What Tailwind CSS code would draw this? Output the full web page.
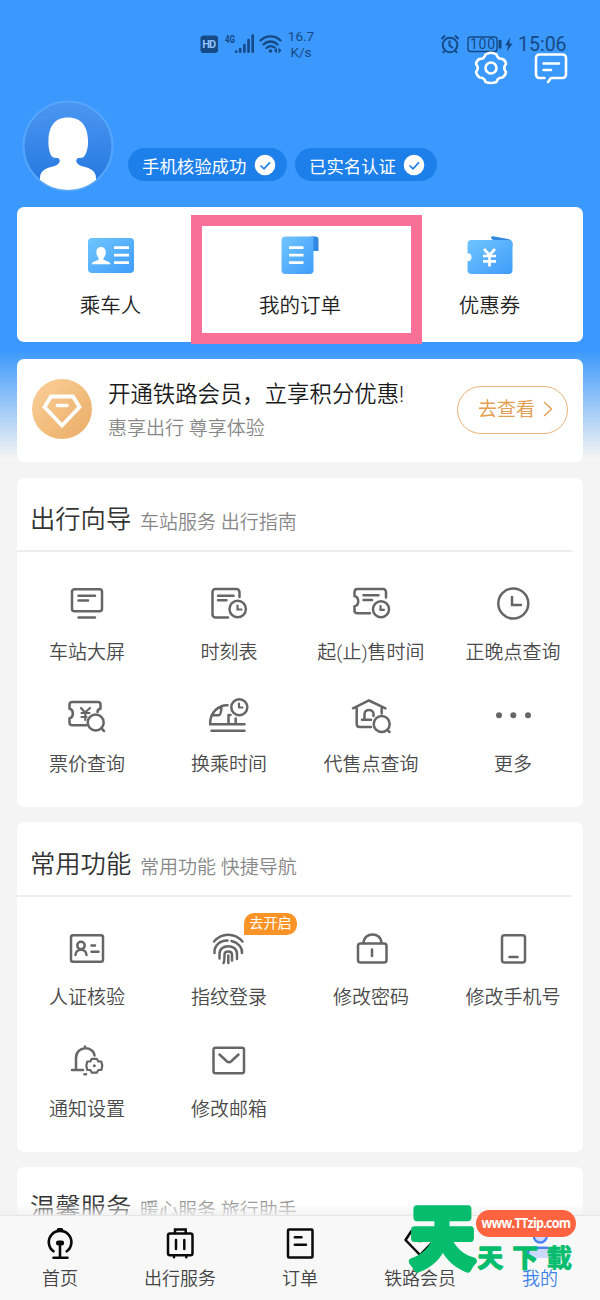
<!DOCTYPE html>
<html lang="zh-CN">
<head>
<meta charset="utf-8">
<title>我的</title>
<script src="https://cdn.jsdelivr.net/npm/@tailwindcss/browser@4"></script>
</head>
<body class="bg-[#f4f4f4]">
<div class="relative flex h-[1300px] w-[600px] flex-col overflow-hidden bg-[#f4f4f4] bg-[linear-gradient(to_bottom,#3b98fc_0px,#3b98fc_350px,#f4f4f4_458px)] bg-no-repeat font-['Roboto','Noto_Sans_CJK_SC',sans-serif] font-[350] text-[#333]">

  <!-- status bar -->
  <header class="flex h-[56px] shrink-0 items-end pr-[33px] pl-[200px] font-normal text-[#164a86]">
    <svg class="mb-[2px] h-[20px] w-[84px]" viewBox="0 0 84 20">
      <rect x="0.5" y="1.5" width="17.5" height="17.5" rx="3" fill="#164a86"/>
      <text x="9.2" y="14.2" font-family="Roboto" font-weight="700" font-size="11" fill="#8fc3fb" text-anchor="middle" textLength="14">HD</text>
      <text x="25" y="9" font-family="Roboto" font-weight="700" font-size="10.5" fill="#164a86" textLength="10" lengthAdjust="spacingAndGlyphs">4G</text>
      <g stroke="#164a86" stroke-width="2.6" stroke-linecap="round"><path d="M36.2 17.5v.2M40.2 15v2.8M44.4 11v6.8M48.500 6v11.800M52.700 1.500v16.300"/></g>
      <g fill="none" stroke="#164a86" stroke-width="2.300" stroke-linecap="round"><path d="M60.500 6.500c5.500-5.500 14.500-5.500 20 0M63.500 10.500c4-4 10-4 14 0M66.500 14c2-2 5.500-2.500 8-.5"/></g>
      <circle cx="70.500" cy="17" r="1.800" fill="#164a86"/><path d="M77 13.500v6l-3-3zM78.500 13.500v6l3-3z" fill="#164a86"/>
    </svg>
    <div class="mb-[-4px] w-[34px] text-center text-[13.500px] leading-[15.500px]">16.7<br>K/s</div>
    <svg class="mb-[1px] ml-auto h-[22px] w-[76px]" viewBox="0 0 76 22" fill="none" stroke="#164a86" stroke-width="2">
      <circle cx="10" cy="12" r="7.300"/><path d="M9.500 7.500v5l3.500 2.500M1.500 6l3.500-3.500M15 2.500l3.500 3.500M4.500 18l-1.500 2M15.500 18l1.500 2"/>
      <rect x="28" y="4" width="29" height="14.500" rx="2.500" stroke-width="1.400"/>
      <path d="M60 7v8.500" stroke-width="3"/>
      <text x="42.500" y="16" font-family="Roboto" font-size="14" fill="#164a86" stroke="none" text-anchor="middle" textLength="25">100</text>
      <path d="M70 4.500l-5 8h3l-1 6 5.500-8h-3z" fill="#164a86" stroke="none"/>
    </svg>
    <div class="ml-[2px] w-[49px] text-[19.500px] leading-[22px]">15:06</div>
  </header>

  <!-- page actions -->
  <div class="-mt-[6px] flex h-[38px] shrink-0 justify-end gap-[24px] pr-[31px]">
    <svg class="h-[36px] w-[36px]" viewBox="0 0 36 36" fill="none" stroke="#fff" stroke-width="2.600" stroke-linejoin="round">
      <path d="M12.500 4.500Q18 1 23.500 4.500Q24.500 9 29.500 9Q33 11 33 14Q29.500 18 33 22Q32.500 25.500 29.500 27.500Q24.500 27.500 23.500 32Q18 34 12.500 32Q11.500 27.500 6.500 27.500Q3.500 25 3 22Q6.500 18 3 14Q3.500 10.500 6.500 9Q11.500 9 12.500 4.500Z"/>
      <circle cx="18" cy="18" r="5.500"/>
    </svg>
    <svg class="h-[36px] w-[36px]" viewBox="0 0 36 36" fill="none" stroke="#fff" stroke-width="2.600" stroke-linecap="round" stroke-linejoin="round">
      <path d="M11.500 28H6.500a3.500 3.500 0 0 1-3.500-3.500V8A3.500 3.500 0 0 1 6.500 4.500H29.500A3.500 3.500 0 0 1 33 8V24.500a3.500 3.500 0 0 1-3.500 3.500H18l-3 4M10.500 13.500H26M10.500 20H18"/>
    </svg>
  </div>

  <!-- profile -->
  <section class="mt-[11px] flex h-[93px] shrink-0 items-start pl-[22px]">
    <svg class="mt-[1px] h-[92px] w-[92px]" viewBox="0 0 92 92">
      <defs><linearGradient id="av" x1="0" y1="0" x2="0" y2="1"><stop offset="0" stop-color="#4b97f1"/><stop offset="1" stop-color="#2475e0"/></linearGradient><clipPath id="ac"><circle cx="46" cy="46" r="44"/></clipPath></defs>
      <circle cx="46" cy="46" r="44.500" fill="url(#av)" stroke="#55a6fb" stroke-width="2"/>
      <path clip-path="url(#ac)" fill="#fff" d="M46 17.500C32 17.500 27 27 26.500 40C26 47 27.500 53 29.500 56Q30.500 58 34 58H36Q38.500 59.500 37.500 62Q36 65 31 66.500C22 68.500 18 72 18 78V92H74V78C74 72 70 68.500 61 66.500Q56 65 54.500 62Q53.500 59.500 56 58H58Q61.500 58 62.500 56C64.500 53 66.500 47 66 40C65.500 27 60 17.500 46 17.500Z"/>
    </svg>
    <div class="mt-[49px] ml-[14px] flex gap-[8px] text-[17.400px] font-normal text-white">
      <div class="flex h-[33px] w-[159px] items-center justify-between rounded-full bg-[#1d7fe9] pr-[11px] pl-[14px]"><span class="pt-[5px] whitespace-nowrap">手机核验成功</span>
        <svg class="h-[22px] w-[22px]" viewBox="0 0 22 22"><circle cx="11" cy="11" r="10.300" fill="#fff"/><path d="M6.500 11.500l3.500 3.300 6-6.500" fill="none" stroke="#1d7fe9" stroke-width="1.700"/></svg></div>
      <div class="flex h-[33px] w-[142px] items-center justify-between rounded-full bg-[#1d7fe9] pr-[12px] pl-[14px]"><span class="pt-[5px] whitespace-nowrap">已实名认证</span>
        <svg class="h-[22px] w-[22px]" viewBox="0 0 22 22"><circle cx="11" cy="11" r="10.300" fill="#fff"/><path d="M6.500 11.500l3.500 3.300 6-6.500" fill="none" stroke="#1d7fe9" stroke-width="1.700"/></svg></div>
    </div>
  </section>

  <main class="mt-[15px] flex flex-col px-[17px]">
    <!-- shortcuts -->
    <section class="relative grid h-[135px] grid-cols-[187px_192px_187px] rounded-[7px] bg-white text-[20.500px] leading-[28px] text-[#222]">
      <div class="flex flex-col items-center pt-[24px]">
        <svg class="h-[50px] w-[50px]" viewBox="0 0 50 50">
          <defs><linearGradient id="bl" x1="0" y1="0" x2="1" y2="1"><stop offset="0" stop-color="#70c5fe"/><stop offset="1" stop-color="#3f9cfa"/></linearGradient></defs>
          <rect x="2" y="7" width="46" height="35" rx="4" fill="url(#bl)"/>
          <path fill="#fff" d="M15 16c-3.300 0-5 2.400-4.700 5.800.2 2.500 1.200 4 2.300 5.200v1.700L7 31q-1.200 1-1.200 2.200H24.500Q24.500 32 23 31l-5.500-2.300V27c1.200-1.200 2.100-2.700 2.300-5.200C20 18.400 18.300 16 15 16zM28 15.200h15v2.900H28zM28 22.700h15v2.900H28zM28 30.200h15v2.900H28z"/>
        </svg>
        <span class="mt-[11px]">乘车人</span>
      </div>
      <div class="flex flex-col items-center pt-[24px]">
        <svg class="h-[50px] w-[50px]" viewBox="0 0 50 50">
          <path d="M36 5.500h4.500q3 0 3 3V20h-4.500q-3 0-3-3z" fill="#3188e0"/>
          <path d="M10 5.500H38.500V39q0 4-4 4H10.500q-4 0-4-4V9.500q0-4 4-4z" fill="url(#bl)"/>
          <path d="M14 16.700h14.500M14 24.200h14.500M14 31.700h14.500" stroke="#fff" stroke-width="2.700"/>
        </svg>
        <span class="mt-[11px]">我的订单</span>
      </div>
      <div class="flex flex-col items-center pt-[24px]">
        <svg class="h-[50px] w-[50px]" viewBox="0 0 50 50">
          <path d="M26 7q0-2 2-1.700L43 8q4 .7 4.500 5l-2 15z" fill="#3188e0"/>
          <path d="M6.500 9H43.500q4 0 4 4V39q0 4-4 4H6.500q-4 0-4-4V30.200a4 4 0 0 0 0-8V13q0-4 4-4z" fill="url(#bl)"/>
          <path d="M19 18l5.500 6 5.500-6M24.500 24v11.500M18 25h13M18 30.300h13" fill="none" stroke="#fff" stroke-width="2.700"/>
        </svg>
        <span class="mt-[11px]">优惠券</span>
      </div>
      <div class="absolute top-[8px] left-[174px] h-[129px] w-[231px] border-[11px] border-[#f86f97]"></div>
    </section>

    <!-- membership -->
    <section class="mt-[17px] flex h-[103px] items-center rounded-[7px] bg-white pr-[15px] pl-[14px]">
      <svg class="mt-[-3px] h-[62px] w-[62px]" viewBox="0 0 62 62">
        <defs><linearGradient id="gd" x1="0" y1="0" x2="1" y2="1"><stop offset="0" stop-color="#fbd09a"/><stop offset="1" stop-color="#eaac65"/></linearGradient></defs>
        <circle cx="31" cy="31" r="30" fill="url(#gd)"/>
        <path d="M20 18.500H42L48.500 29L31 47.500L13.500 29z" fill="none" stroke="#fff" stroke-width="3.800"/><path d="M26.500 27.500h9.500" stroke="#fff" stroke-width="3.600" stroke-linecap="round"/>
      </svg>
      <div class="mt-[1px] ml-[15px] flex flex-col whitespace-nowrap">
        <span class="text-[22.400px] leading-[34px] text-[#1a1a1a]">开通铁路会员，立享积分优惠!</span>
        <span class="pt-px text-[19px] leading-[34px] text-[#888]">惠享出行 尊享体验</span>
      </div>
      <div class="mt-[-2px] ml-auto flex h-[48px] w-[111px] items-center rounded-full border-[1.500px] border-[#e9b577] pl-[20px] text-[19px] font-normal text-[#e3a055]"><span class="pt-px whitespace-nowrap">去查看</span>
        <svg class="ml-[7px] h-[18px] w-[12px]" viewBox="0 0 12 18" fill="none" stroke="#e3a055" stroke-width="1.400"><path d="M2 1l7.500 7L2 15"/></svg></div>
    </section>

    <!-- travel guide -->
    <section class="mt-[16px] h-[329px] rounded-[7px] bg-white">
      <div class="mr-[11px] flex h-[74px] items-baseline border-b-2 border-[#ededed] pt-[22px] pl-[13px] whitespace-nowrap"><h2 class="w-[110px] text-[25.300px] leading-[40px]">出行向导</h2><span class="relative top-px text-[19px] text-[#888]">车站服务 出行指南</span></div>
      <div class="-mx-px grid grid-cols-4 gap-y-[28.500px] pt-[32px] text-[19px] leading-[28px] text-[#4a4a4a]">
        <div class="flex flex-col items-center"><svg class="h-[40px] w-[40px]" viewBox="0 0 40 40" fill="none" stroke="#666" stroke-width="2.500" stroke-linecap="round"><rect x="5" y="5.200" width="30" height="22" rx="2.500"/><path d="M11.500 11.700H28M11.500 16.500H21M11.500 33.500H28"/></svg><span class="mt-[15px]">车站大屏</span></div>
        <div class="flex flex-col items-center"><svg class="h-[40px] w-[40px]" viewBox="0 0 40 40" fill="none" stroke="#666" stroke-width="2.500" stroke-linecap="round"><path d="M30.500 13V8a3 3 0 0 0-3-3H6.500a3 3 0 0 0-3 3V30.500a3 3 0 0 0 3 3H19M9 11.700H24.500M9 16.300H17.500"/><circle cx="28.700" cy="25" r="8.200"/><path d="M28.500 21.500v4h4" stroke-width="2.200"/></svg><span class="mt-[15px]">时刻表</span></div>
        <div class="flex flex-col items-center"><svg class="h-[40px] w-[40px]" viewBox="0 0 40 40" fill="none" stroke="#666" stroke-width="2.500" stroke-linecap="round"><path d="M35 13.500V8a3 3 0 0 0-3-3H6.500Q3.500 5 3.500 8V12C8.500 13.500 8.500 21 3.500 22.500V26.500Q3.500 29.300 6.500 29.300H19M12.500 11.300H27.500M12.500 16H21"/><circle cx="30" cy="25.300" r="8"/><path d="M29.500 22v3.800h3.500" stroke-width="2.200"/></svg><span class="mt-[15px] whitespace-nowrap">起(止)售时间</span></div>
        <div class="flex flex-col items-center"><svg class="h-[40px] w-[40px]" viewBox="0 0 40 40" fill="none" stroke="#666" stroke-width="2.500" stroke-linecap="round"><circle cx="20.300" cy="19.500" r="15"/><path d="M19 13v8h9"/></svg><span class="mt-[15px]">正晚点查询</span></div>
        <div class="flex flex-col items-center"><svg class="h-[40px] w-[40px]" viewBox="0 0 40 40" fill="none" stroke="#666" stroke-width="2.500" stroke-linecap="round"><path d="M19 29.300H5.500Q2.500 29.300 2.500 26.500V22.500C7 21 7 14 2.500 12.500V8.500Q2.500 6 5.500 6H31Q33.500 6 33.500 8.500V12.500Q30.500 13.500 30.500 16"/><path d="M14 12l4 4.500 5-4.500M18.300 16.500v7.500M14.500 17h8M14.500 21h5" stroke-width="2.200"/><circle cx="28.700" cy="26.500" r="8"/><path d="M34.500 32.500l2.500 2.500"/></svg><span class="mt-[15px]">票价查询</span></div>
        <div class="flex flex-col items-center"><svg class="h-[40px] w-[40px]" viewBox="0 0 40 40" fill="none" stroke="#666" stroke-width="2.500" stroke-linecap="round" stroke-linejoin="round"><path d="M18.500 9.300C9 9 1 17 1 28.300H35.500M2.500 34.700H35.500M4 19.300H9.500Q12 19.300 12.500 11M19.500 28V19H21.500M26.700 28V22.500"/><circle cx="30.300" cy="11.300" r="8"/><path d="M30 7.500v4h3.500" stroke-width="2.200"/></svg><span class="mt-[15px]">换乘时间</span></div>
        <div class="flex flex-col items-center"><svg class="h-[40px] w-[40px]" viewBox="0 0 40 40" fill="none" stroke="#666" stroke-width="2.500" stroke-linecap="round"><path d="M2 12.300L18 4.500L34.500 12.300M5.700 11.500V28Q5.700 31 8.700 31H20M30.700 12V17.500M11 23.800H20M13.500 23.500V18C13.500 12.500 22.500 12.500 22.500 18V20"/><circle cx="30.700" cy="28" r="8"/><path d="M36.500 34l2 2"/></svg><span class="mt-[15px]">代售点查询</span></div>
        <div class="flex flex-col items-center"><svg class="h-[40px] w-[40px]" viewBox="0 0 40 40" fill="#666"><circle cx="6" cy="19.300" r="3"/><circle cx="20.300" cy="19.300" r="3"/><circle cx="35" cy="19.300" r="3"/></svg><span class="mt-[15px]">更多</span></div>
      </div>
    </section>

    <!-- common functions -->
    <section class="mt-[15px] h-[330px] rounded-[7px] bg-white">
      <div class="mr-[11px] flex h-[75px] items-baseline border-b-2 border-[#ededed] pt-[23px] pl-[13px] whitespace-nowrap"><h2 class="w-[110px] text-[25.300px] leading-[40px]">常用功能</h2><span class="relative top-px text-[19px] text-[#888]">常用功能 快捷导航</span></div>
      <div class="-mx-px grid grid-cols-4 gap-y-[28.500px] pt-[32px] text-[19px] leading-[28px] text-[#4a4a4a]">
        <div class="flex flex-col items-center"><svg class="h-[40px] w-[40px]" viewBox="0 0 40 40" fill="none" stroke="#666" stroke-width="2.500" stroke-linecap="round"><rect x="4" y="6.300" width="32" height="26.500" rx="2"/><circle cx="14" cy="16.500" r="3.700"/><path d="M8.500 26C9 19 19 19 19.500 26M24.500 16.500H28M24.500 22.700H31.500"/></svg><span class="mt-[15px]">人证核验</span></div>
        <div class="relative flex flex-col items-center"><svg class="h-[40px] w-[40px]" viewBox="0 0 40 40" fill="none" stroke="#666" stroke-width="2.500" stroke-linecap="round"><path d="M5 12.500C13 3.500 25.500 3.500 33.500 12.500M5.500 24C5 16.500 11 11.300 18.500 11.500M22.500 12C29 13.500 33.500 18.500 33 24M10.500 29.500V25C10.500 14.500 28 14.500 28 25V30M14.500 34Q15.500 33 15.500 25.500C15.500 21.500 23 21.500 23 25.500V31.500M19.300 26.500V34"/></svg><span class="mt-[15px]">指纹登录</span>
          <span class="absolute -top-[16px] left-[86px] flex h-[22px] w-[53px] items-center justify-center rounded-[10px] rounded-bl-none bg-[#fb9426] pb-[3px] text-[14.200px] leading-[18px] font-normal text-white">去开启</span></div>
        <div class="flex flex-col items-center"><svg class="h-[40px] w-[40px]" viewBox="0 0 40 40" fill="none" stroke="#666" stroke-width="2.500" stroke-linecap="round"><rect x="7" y="14.500" width="28.500" height="19" rx="2.500"/><path d="M12.500 14C13 2.500 30 2.500 30.500 14M21 20.500v6.500"/></svg><span class="mt-[15px]">修改密码</span></div>
        <div class="flex flex-col items-center"><svg class="h-[40px] w-[40px]" viewBox="0 0 40 40" fill="none" stroke="#666" stroke-width="2.500" stroke-linecap="round"><rect x="9" y="6.300" width="23" height="27.300" rx="2.500"/><path d="M16.500 28h8"/></svg><span class="mt-[15px]">修改手机号</span></div>
        <div class="flex flex-col items-center"><svg class="h-[40px] w-[40px]" viewBox="0 0 40 40" fill="none" stroke="#666" stroke-width="2.500" stroke-linecap="round" stroke-linejoin="round"><path d="M5 29H16M9 28.500V17C9 4.500 26.500 4.500 27.500 14.500M18 5.500v1M17.500 33.200h1.500"/><path d="M24.800 17.800h5l1.500 2.700h3L35.300 24.800 34.300 29h-3l-1.500 2.700h-5l-1.500-2.700h-3L19.300 24.800 20.300 20.500h3z" stroke-width="2.200"/><circle cx="27.300" cy="24.800" r="1.500" fill="#666" stroke="none"/></svg><span class="mt-[15px]">通知设置</span></div>
        <div class="flex flex-col items-center"><svg class="h-[40px] w-[40px]" viewBox="0 0 40 40" fill="none" stroke="#666" stroke-width="2.500" stroke-linecap="round"><rect x="4.500" y="6.700" width="30.500" height="25.500" rx="2"/><path d="M10.500 13.500L18 20.500Q20 22 22 20.500L29.500 13.500"/></svg><span class="mt-[15px]">修改邮箱</span></div>
      </div>
    </section>

    <!-- warm services -->
    <section class="mt-[15px] h-[133px] rounded-[7px] bg-white">
      <div class="flex items-baseline pt-[21px] pl-[13px] whitespace-nowrap"><h2 class="w-[110px] text-[25.300px] leading-[40px]">温馨服务</h2><span class="relative top-px text-[19px] text-[#999]">暖心服务 旅行助手</span></div>
    </section>
  </main>

  <!-- tab bar -->
  <nav class="absolute inset-x-0 bottom-0">
    <div class="h-[12px] bg-linear-to-b from-white/0 to-[#f0f0f0]/80"></div>
    <div class="grid h-[85px] grid-cols-5 border-t border-[#e6e6e6] bg-[#f8f8f8] pt-[7px] text-[18px] leading-[26px] text-[#444]">
      <div class="flex flex-col items-center"><svg class="h-[40px] w-[40px]" viewBox="0 0 40 40" fill="none" stroke="#0a0a0a" stroke-width="2.600" stroke-linecap="round"><path d="M13.500 28.300A11.300 11.300 0 1 1 26.700 28.300M20 23v11M13.500 34.700H27.500"/><path d="M18.500 6.800h3" stroke-width="3.500"/><rect x="17.300" y="18.800" width="5.500" height="2.500" rx="1" fill="#0a0a0a"/></svg><span class="mt-[3px]">首页</span></div>
      <div class="flex flex-col items-center"><svg class="h-[40px] w-[40px]" viewBox="0 0 40 40" fill="none" stroke="#0a0a0a" stroke-width="2.500" stroke-linecap="round"><rect x="8" y="10.500" width="24.500" height="21.700" rx="2"/><path d="M15 10V6.500H25.700V10M16 17v9M24.300 17v9M14 32.500V34.300M26.300 32.500V34.300"/></svg><span class="mt-[3px]">出行服务</span></div>
      <div class="flex flex-col items-center"><svg class="h-[40px] w-[40px]" viewBox="0 0 40 40" fill="none" stroke="#0a0a0a" stroke-width="2.500" stroke-linecap="round"><rect x="8" y="6.500" width="24.500" height="28" rx="1"/><path d="M14.800 14.300H21.500M14.800 21.700H26"/></svg><span class="mt-[3px]">订单</span></div>
      <div class="flex flex-col items-center"><svg class="h-[40px] w-[40px]" viewBox="0 0 40 40" fill="none" stroke="#0a0a0a" stroke-width="2.500" stroke-linejoin="round"><path d="M11.500 8H28.500L34.500 17L20 32L5.500 17zM15 15.500Q20 20.500 25 15.500"/></svg><span class="mt-[3px] whitespace-nowrap">铁路会员</span></div>
      <div class="flex flex-col items-center text-[#3b82e8]"><svg class="h-[40px] w-[40px]" viewBox="0 0 40 40" fill="#cdd9fb" stroke="#4f83f2" stroke-width="2.400"><circle cx="20.300" cy="13" r="6.500"/><path d="M8 35V31Q8 24.800 15 24.800H26Q32.500 24.800 32.500 31V35" /></svg><span class="mt-[3px]">我的</span></div>
    </div>
  </nav>

  <!-- site stamp -->
  <div class="absolute top-[1203px] left-[406px] h-[76px] w-[176px]">
    <svg class="h-[76px] w-[176px] overflow-visible font-['Noto_Sans_CJK_SC',sans-serif] font-bold" viewBox="0 0 176 76" fill="#05bd6c" stroke="#05bd6c" stroke-linejoin="round" stroke-linecap="round">
      <text transform="translate(4.500 60) scale(1 1.060)" x="0" y="0" font-size="64" stroke-width="7">天</text>
      <g font-family="Noto Sans CJK TC" font-size="25.500" stroke-width="1.500"><text x="71.500" y="63.500">天</text><text x="106.500" y="63.500">下</text><text x="140.500" y="63.500" stroke-width="0.700">載</text></g>
    </svg>
    <span class="absolute top-[7px] left-[70px] flex h-[27px] w-[100px] items-center justify-center rounded-full bg-[#ff6340] pt-px font-['Open_Sans'] text-[12.500px] font-bold tracking-[-0.700px] text-white"><span class="scale-y-[1.120]">www.TTzip.com</span></span>
  </div>
</div>
</body>
</html>
